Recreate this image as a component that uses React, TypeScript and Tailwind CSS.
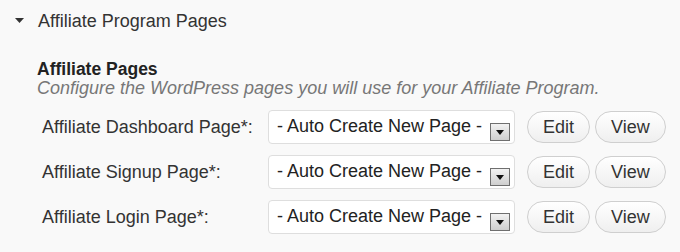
import React from "react";

const rows = ["Affiliate Dashboard Page*:", "Affiliate Signup Page*:", "Affiliate Login Page*:"];

function Row({ label }: { label: string }) {
  return (
    <div className="flex items-center h-[34px]">
      <div className="w-[268px] shrink-0 pl-[42px] text-[18px] text-[#333] leading-[20px] whitespace-nowrap">{label}</div>
      <div className="w-[247px] shrink-0 h-[34px] border border-[#dedede] rounded-[4px] bg-white flex items-center pl-[8px] pr-[4px]">
        <span className="text-[18px] leading-[20px] mb-[2px] text-[#222] whitespace-nowrap flex-1">- Auto Create New Page -</span>
        <span className="self-end mb-[2px] w-[20px] h-[18px] shrink-0 border border-[#6f6f6f] bg-gradient-to-b from-[#f2f2f2] to-[#cfcfcf] flex items-center justify-center">
          <svg width="8" height="5" viewBox="0 0 8 5">
            <path d="M0 0 H8 L4 5 Z" fill="#111" />
          </svg>
        </span>
      </div>
      <div className="flex items-center ml-[12px] gap-[5px] shrink-0">
        <span className="h-[32px] px-[15px] rounded-full border border-[#cfcfcf] bg-gradient-to-b from-white to-[#efefef] text-[18px] text-[#333] flex items-center">Edit</span>
        <span className="h-[32px] px-[15px] rounded-full border border-[#cfcfcf] bg-gradient-to-b from-white to-[#efefef] text-[18px] text-[#333] flex items-center">View</span>
      </div>
    </div>
  );
}

export default function App() {
  return (
    <div className="w-[680px] h-[252px] bg-[#f9f9f9] font-['Liberation_Sans',Arial,sans-serif] overflow-hidden">
      <div className="h-[42px] flex items-center pl-[15px]">
        <svg width="9" height="5" viewBox="0 0 9 5" className="mt-[-1px]">
          <path d="M0 0 H9 L4.5 5 Z" fill="#333" />
        </svg>
        <span className="ml-[14px] text-[18px] text-[#333] leading-[20px]">Affiliate Program Pages</span>
      </div>
      <div className="pl-[37px] mt-[18px]">
        <div className="text-[17.5px] font-bold text-[#222] leading-[19px]">Affiliate Pages</div>
        <div className="text-[18px] italic text-[#777] leading-[19px]">Configure the WordPress pages you will use for your Affiliate Program.</div>
      </div>
      <div className="mt-[12px] flex flex-col gap-[11px]">
        {rows.map((r) => (
          <Row key={r} label={r} />
        ))}
      </div>
    </div>
  );
}
